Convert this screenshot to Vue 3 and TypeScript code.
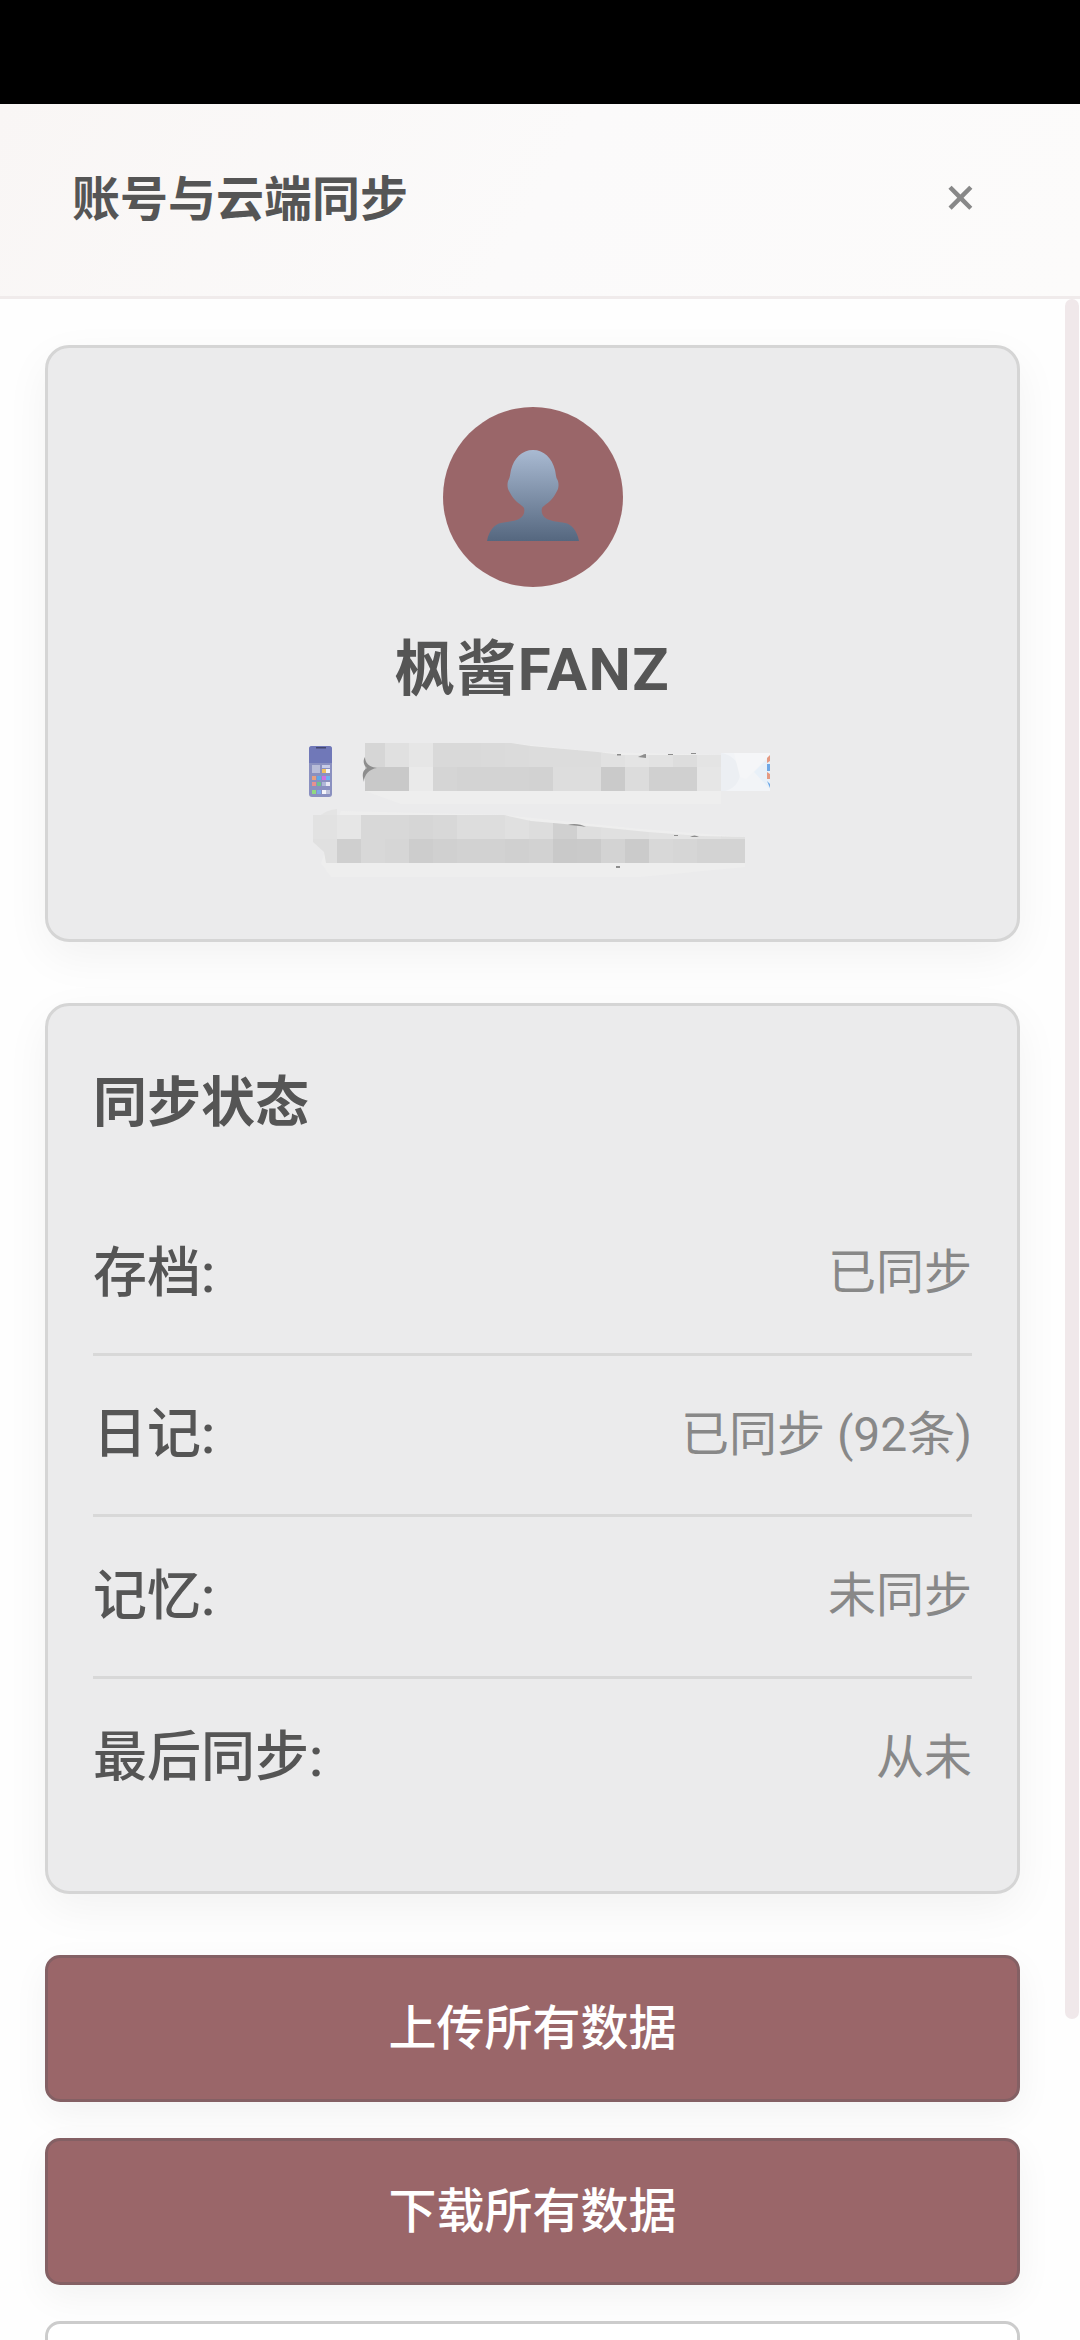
<script setup lang="ts">
interface StatusRow {
  label: string
  value: string
}

const rows: StatusRow[] = [
  { label: '存档:', value: '已同步' },
  { label: '日记:', value: '已同步 (92条)' },
  { label: '记忆:', value: '未同步' },
  { label: '最后同步:', value: '从未' },
]

const cell = 24

// pixelated patches that hide the contact details
const mosaics = [
  { x: 360, y: 744, shades: ['#d6d6d6', '#e0e0e0', '#e6e6e6', '#d9d9d9', '#d9d9d9', '#dadada', '#dbdbdb', '#dcdcdc', '#dcdcdc', '#dcdcdc', '#e1e1e1', '#e4e4e4', '#e2e2e2', '#dddddd', '#e4e4e4'], clip: 'url(#slope-a)' },
  { x: 360, y: 768, shades: ['#c9c9c9', '#c9c9c9', '#eaeaea', '#d5d5d5', '#d3d3d3', '#d3d3d3', '#d3d3d3', '#d2d2d2', '#dddddd', '#dddddd', '#cacaca', '#dcdcdc', '#d0d0d0', '#d0d0d0', '#e6e6e6'], clip: 'url(#slope-a)' },
  { x: 312, y: 816, shades: ['#e2e2e2', '#e6e6e6', '#d8d8d8', '#d8d8d8', '#d6d6d6', '#d8d8d8', '#dddddd', '#dddddd', '#e0e0e0', '#dddddd', '#d0d0d0', '#dedede', '#e0e0e0', '#e0e0e0', '#e2e2e2', '#e4e4e4', '#e2e2e2', '#e0e0e0'], clip: 'url(#slope-b)' },
  { x: 312, y: 840, shades: ['#e0e0e0', '#cfcfcf', '#d8d8d8', '#d6d6d6', '#cdcdcd', '#d0d0d0', '#d2d2d2', '#d2d2d2', '#d0d0d0', '#d2d2d2', '#c9c9c9', '#cacaca', '#d3d3d3', '#cbcbcb', '#d8d8d8', '#d6d6d6', '#d3d3d3', '#d3d3d3'], clip: 'url(#slope-b)' },
]

const tiles = [
  { x: 321, y: 770, fill: '#f0c060' },
  { x: 325, y: 770, fill: '#f2f2fa' },
  { x: 311, y: 777, fill: '#e8a080' },
  { x: 316, y: 777, fill: '#60a8e8' },
  { x: 321, y: 777, fill: '#d070e0' },
  { x: 325, y: 777, fill: '#70b0f0' },
  { x: 311, y: 783, fill: '#e89090' },
  { x: 316, y: 783, fill: '#70c090' },
  { x: 321, y: 783, fill: '#b0b8d8' },
  { x: 325, y: 783, fill: '#e8e8f4' },
  { x: 311, y: 791, fill: '#90d880' },
  { x: 316, y: 791, fill: '#80a8e8' },
  { x: 321, y: 791, fill: '#f4f4fa' },
  { x: 325, y: 791, fill: '#c0c4dc' },
]
</script>

<template>
  <div class="screen">
    <div class="status-bar"></div>
    <header class="sheet-header">
      <h1 class="sheet-title">账号与云端同步</h1>
      <span class="close">×</span>
    </header>

    <main class="sheet-body">
      <section class="card profile">
        <div class="avatar">
          <svg class="avatar-icon" viewBox="0 0 92 92" width="92" height="92">
            <defs>
              <linearGradient id="bust" x1="0" y1="0" x2="0" y2="1">
                <stop offset="0" stop-color="#a9bad2" />
                <stop offset="1" stop-color="#55677f" />
              </linearGradient>
            </defs>
            <path
              fill="url(#bust)"
              d="M46 0C57 0 65 8 68 20C69 25 69 27 70 29C72 32 72 38 70 41C68 45 66 48 64 50C60 54 56 56 55 58C54 62 55 66 60 69C64 71 72 72 78 73C84 74 90 80 92 91H0C2 80 8 74 14 73C20 72 28 71 32 69C37 66 38 62 37 58C36 56 32 54 28 50C26 48 24 45 22 41C20 38 20 32 22 29C23 27 23 25 24 20C27 8 35 0 46 0Z"
            />
          </svg>
        </div>
        <h2 class="name">枫酱FANZ</h2>
        <svg class="contact" viewBox="292 740 480 140" width="480" height="140">
          <defs>
            <clipPath id="slope-a">
              <polygon points="364,744 510,744 530,747 597,753 620,756 720,756 720,792 364,792" />
            </clipPath>
            <clipPath id="slope-b">
              <polygon points="312,816 503,816 530,822 597,828 647,833 700,837 744,838 744,864 325,864 323,853 312,843" />
            </clipPath>
          </defs>

          <!-- soft smears behind the patches -->
          <path fill="#eeeeee" d="M364 744L510 744L597 753L720 756L720 805L400 805L364 792Z" />
          <path fill="#eeeeee" d="M320 864L330 878L640 878L744 868L744 838L640 830L503 816L340 812Z" />
          <path fill="#e4e4e4" d="M312 843L312 826C316 816 326 811 336 810L336 843Z" />

          <!-- phone icon -->
          <rect x="308" y="747" width="23" height="51" rx="3" fill="#8a90c0" />
          <path d="M308 750a3 3 0 0 1 3-3h17a3 3 0 0 1 3 3v14h-23Z" fill="#7078b8" />
          <rect x="315" y="748" width="10" height="1.5" fill="#434770" />
          <rect x="311" y="766" width="8" height="8" fill="#b8bcd8" />
          <rect x="321" y="766" width="8" height="3" fill="#c8cce8" />
          <rect v-for="(t, i) in tiles" :key="i" :x="t.x" :y="t.y" width="4" height="4" :fill="t.fill" />

          <g v-for="(m, i) in mosaics" :key="i" :clip-path="m.clip">
            <rect
              v-for="(shade, j) in m.shades"
              :key="j"
              :x="m.x + j * cell"
              :y="m.y"
              :width="cell + 0.5"
              :height="cell"
              :fill="shade"
            />
          </g>

          <!-- bits of the hidden text left over around the patches -->
          <g fill="#8d8d8d">
            <path d="M364 758C364 764 368 768 376 769C368 770 363 776 363 783C361 776 361 772 366 769C362 766 362 761 364 758Z" />
            <path d="M637 758C640 757 642 755 645 755L645 759Z" />
            <rect x="616" y="755" width="4" height="1.5" />
            <rect x="667" y="755" width="5" height="1" />
            <rect x="690" y="754" width="5" height="1" />
            <path d="M567 826C572 824 580 825 585 828C580 827 572 826 567 826Z" />
            <rect x="673" y="836" width="4" height="1" />
            <path d="M689 838C692 836 695 836 698 838Z" />
            <rect x="615" y="867" width="4" height="2" />
          </g>

          <!-- envelope -->
          <rect x="720" y="754" width="49" height="38" fill="#f2f4f7" />
          <path d="M720 754C733 756 740 766 739 776C738 784 732 790 724 792H720Z" fill="#eceff3" />
          <path d="M739 778L745 780L769 756V754H733Z" fill="#f5f6f8" />
          <path d="M753 773L769 757V790Z" fill="#e8f0f8" />
          <path d="M766 759L769 756V762L766 764Z" fill="#e59a82" />
          <rect x="766" y="765" width="3" height="7" fill="#6fa8e6" />
          <path d="M766 773L769 775V780L766 780Z" fill="#e59a82" />
          <path d="M766 782L769 785V789Z" fill="#6fa8e6" />
        </svg>
      </section>

      <section class="card status">
        <h3 class="status-title">同步状态</h3>
        <div v-for="row in rows" :key="row.label" class="status-row">
          <span class="status-label">{{ row.label }}</span>
          <span class="status-value">{{ row.value }}</span>
        </div>
      </section>

      <button class="btn primary">上传所有数据</button>
      <button class="btn primary">下载所有数据</button>
      <button class="btn ghost"></button>
    </main>

    <div class="scrollbar"></div>
  </div>
</template>

<style scoped>
.screen {
  position: relative;
  height: 2340px;
  overflow: hidden;
  background: #fefefe;
  color: #555;
  font-family: Roboto, "Noto Sans CJK SC", sans-serif;
}

.status-bar {
  height: 104px;
  background: #000;
}

.sheet-header {
  height: 192px;
  padding: 0 72px;
  display: flex;
  align-items: center;
  justify-content: space-between;
  background: linear-gradient(120deg, #f9f6f5, #fbfafa 50%, #fcfbfa);
  border-bottom: 3px solid #f0ebeb;
}

.sheet-title {
  margin: 0;
  font-size: 48px;
  font-weight: 700;
  line-height: 1.5;
}

.close {
  margin: -8px 32px 0 0;
  font-family: "Noto Sans", sans-serif;
  font-size: 54px;
  font-weight: 500;
  line-height: 1;
  color: #888;
}

.sheet-body {
  padding: 46px 60px 0 45px;
  display: flex;
  flex-direction: column;
}

.card {
  border: 3px solid #d5d5d5;
  border-radius: 24px;
  background: #ebebec;
  box-shadow: 0 15px 45px rgba(0, 0, 0, 0.05);
}

.profile {
  padding: 59px 0 60px;
  display: flex;
  flex-direction: column;
  align-items: center;
  margin-bottom: 61px;
}

.avatar {
  width: 180px;
  height: 180px;
  border-radius: 50%;
  background: #9a6669;
  display: flex;
  align-items: center;
  justify-content: center;
}

.avatar-icon {
  display: block;
  margin-top: -2px;
}

.name {
  margin: 38px 0 24px;
  font-size: 60px;
  font-weight: 700;
  line-height: 90px;
  letter-spacing: 1.5px;
}

.contact {
  display: block;
}

.status {
  padding: 57px 45px 54px;
  margin-bottom: 61px;
}

.status-title {
  margin: 0 0 50px;
  font-size: 54px;
  font-weight: 700;
  line-height: 81px;
}

.status-row {
  display: flex;
  justify-content: space-between;
  align-items: center;
  height: 158.5px;
  font-size: 54px;
  line-height: 1.5;
}

.status-row + .status-row {
  border-top: 3px solid #d8d8d8;
  box-sizing: content-box;
}

.status-label {
  color: #555;
  font-weight: 500;
}

.status-value {
  color: #888;
  font-size: 48px;
}

.btn {
  display: block;
  width: 100%;
  box-sizing: border-box;
  font-family: inherit;
  padding: 0;
}

.primary {
  height: 147px;
  margin-bottom: 36px;
  border: 3px solid #846064;
  border-radius: 15px;
  background: #9a6669;
  color: #fff;
  font-size: 48px;
  font-weight: 500;
  line-height: 1.5;
  box-shadow: 0 12px 36px rgba(0, 0, 0, 0.05);
}

.ghost {
  height: 147px;
  border: 3px solid #cccccc;
  border-radius: 15px;
  background: #fff;
}

/* scroll thumb sits on top of the sheet */
.scrollbar {
  position: absolute;
  top: 299px;
  left: 1065px;
  width: 14px;
  height: 1720px;
  border-radius: 7px;
  background: #f0e8ea;
}
</style>

<style>
html,
body {
  margin: 0;
  background: #fff;
}
</style>
